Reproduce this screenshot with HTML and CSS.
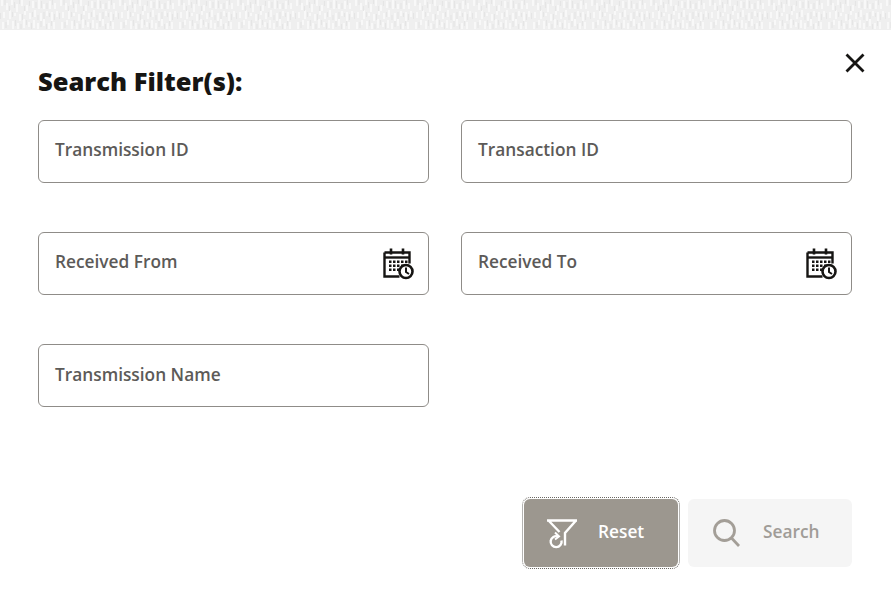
FILE: index.html
```html
<!DOCTYPE html>
<html>
	<head>
	<meta charset="utf-8">
	<title>Search Filter(s)</title>
	<link rel="stylesheet" href="styles.css">
	</head>

	<body>
		<!-- page behind the dialog -->
		<svg class="backdrop" width="891" height="30">
			<defs>
				<pattern id="grain" width="59" height="30" patternUnits="userSpaceOnUse">
					<rect width="59" height="30" fill="#efefef"/>
					<path d="M2 0v6M7 3v7M12 0v5M17 4v8M22 0v6M27 5v6M33 1v7M39 0v9M44 4v5M50 1v8M55 3v6M4 12v6M10 10v9M15 13v3M20 14v7M25 11v4M30 13v6M35 10v7M41 13v8M47 11v5M52 12v9M57 11v6M3 22v7M8 20v5M13 21v8M18 23v6M24 19v9M29 22v5M34 20v8M38 23v6M44 19v7M49 23v6M54 22v7" stroke="#f8f8f8" stroke-width="2"/>
					<path d="M5 0v5M9.500 6v5M14.500 2v6M19.500 0v4M24.500 6v5M29.500 1v5M36 2v6M41.500 1v7M47 3v6M52.500 0v5M0.500 13v6M12.500 12v5M22.500 14v6M32.500 12v5M38 15v5M44 12v7M49.500 13v4M54.500 14v6M6 22v6M15.500 20v6M21 24v5M26.500 20v5M31.500 23v6M41 21v6M46.500 24v5M51.500 21v5" stroke="#e5e5e5" stroke-width="1.200"/>
				</pattern>
			</defs>
			<rect width="891" height="30" fill="url(#grain)"/>
		</svg>

		<div class="dialog">
			<button class="close" type="button" aria-label="Close">
				<svg width="20" height="20" viewBox="0 0 20 20">
					<path d="M1.500 1.500l17 17M18.500 1.500l-17 17" stroke="#161513" stroke-width="2.800" fill="none"/>
				</svg>
			</button>

			<h1 class="title">Search Filter(s):</h1>

			<div class="fields">
				<div class="field"><span>Transmission ID</span></div>
				<div class="field"><span>Transaction ID</span></div>

				<div class="field">
					<span>Received From</span>
					<svg class="cal" width="31" height="32" viewBox="0 0 31 32">
						<use href="#calendar"/>
					</svg>
				</div>
				<div class="field">
					<span>Received To</span>
					<svg class="cal" width="31" height="32" viewBox="0 0 31 32">
						<use href="#calendar"/>
					</svg>
				</div>

				<div class="field field-low"><span>Transmission Name</span></div>
			</div>

			<div class="actions">
				<button class="btn btn-reset" type="button">
					<svg width="32" height="32" viewBox="0 0 32 32" fill="none" stroke="#fff" stroke-width="2.400">
						<path d="M1 3.500h30M2.500 3.500l11 11.500M30 3.500l-11 12.500v12.500"/>
						<path d="M12 19.500a5.500 5.500 0 1 0 3.500 4"/>
						<path d="M9 15.500l4 4-4 3" stroke-width="2"/>
					</svg>
					<span>Reset</span>
				</button>
				<button class="btn btn-search" type="button">
					<svg width="30" height="30" viewBox="0 0 30 30" fill="none" stroke="#a39e97" stroke-width="2.800">
						<circle cx="12.500" cy="12.500" r="10"/>
						<path d="M19.500 20l7.500 8"/>
					</svg>
					<span>Search</span>
				</button>
			</div>
		</div>

		<svg class="defs" width="0" height="0">
			<g id="calendar">
				<path d="M1.500 4.500h25v11M1.500 4.500v24h15" fill="none" stroke="#161513" stroke-width="2.400"/>
				<path d="M1.500 9.500h25" stroke="#161513" stroke-width="2.400"/>
				<path d="M8 0.500v6M20 0.500v6" stroke="#161513" stroke-width="2.600"/>
				<path d="M6 12.500h2.500v2.500h-2.500zM10 12.500h2.500v2.500h-2.500zM14 12.500h2.500v2.500h-2.500zM18 12.500h2.500v2.500h-2.500zM22 12.500h2.500v2.500h-2.500zM6 16.500h2.500v2.500h-2.500zM10 16.500h2.500v2.500h-2.500zM14 16.500h2.500v2.500h-2.500zM18 16.500h2.500v2.500h-2.500zM6 20.500h2.500v2.500h-2.500zM10 20.500h2.500v2.500h-2.500zM14 20.500h2.500v2.500h-2.500z" fill="#161513"/>
				<circle cx="23" cy="23.500" r="6.500" fill="#fff" stroke="#161513" stroke-width="2.600"/>
				<path d="M23 19.500v4.500l3 2" fill="none" stroke="#161513" stroke-width="2"/>
			</g>
		</svg>
	</body>
</html>
```

FILE: styles.css
```css
body, html {
	height: 100%;
	min-height: 100%;
}

body {
	margin: 0;
	padding: 0;
	background: #fff;
	font-family: "Open Sans", sans-serif;
	overflow: hidden;
}

.backdrop {
	display: block;
}

.defs {
	position: absolute;
}

.dialog {
	position: relative;
	padding: 34px 39px 0 38px;
}

.close {
	position: absolute;
	top: 23px;
	right: 26px;
	padding: 0;
	border: 0;
	background: none;
	line-height: 0;
}

.title {
	margin: 0 0 22px;
	font-size: 25.500px;
	line-height: 34px;
	font-weight: 800;
	color: #161513;
}

.fields {
	display: grid;
	grid-template-columns: 391px 391px;
	grid-auto-rows: 63px;
	column-gap: 32px;
	row-gap: 49px;
}

.field {
	display: flex;
	align-items: center;
	justify-content: space-between;
	padding: 0 14px 4px 16px;
	box-sizing: border-box;
	border: 1px solid #8f8c88;
	border-radius: 6px;
	font-size: 17.300px;
	font-weight: 600;
	color: #5c5a58;
}

.field-low {
	padding-bottom: 2px;
}

.cal {
	margin-top: 4px;
}

.actions {
	display: flex;
	justify-content: flex-end;
	gap: 10px;
	margin-top: 92px;
}

.btn {
	display: flex;
	align-items: center;
	height: 68px;
	padding: 0;
	box-sizing: border-box;
	border: 0;
	border-radius: 6px;
	font-family: inherit;
	font-size: 17.300px;
	font-weight: 600;
}

.btn span {
	padding-bottom: 3px;
}

.btn-reset {
	width: 154px;
	padding-left: 22px;
	gap: 20px;
	background: #9c978f;
	color: #fff;
	outline: 1px dotted #6b6864;
	outline-offset: 1px;
}

.btn-search {
	width: 164px;
	padding-left: 24px;
	gap: 21px;
	background: #f5f5f5;
	color: #a09c97;
}
```
